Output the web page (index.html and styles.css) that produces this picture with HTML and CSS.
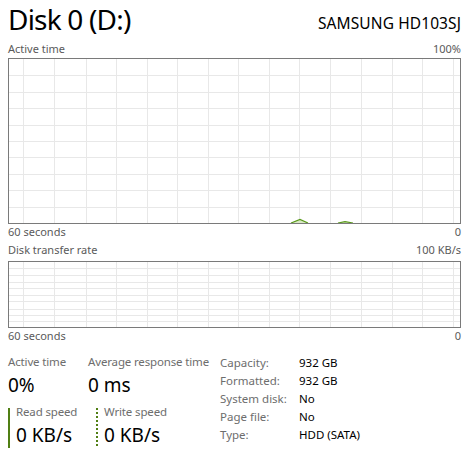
FILE: index.html
```html
<!DOCTYPE html>
<html>
<head>
<meta charset="utf-8">
<link rel="stylesheet" href="styles.css">
</head>
<body>
<div class="page">
  <header class="head">
    <h1 class="title">Disk 0 (D:)</h1>
    <div class="model">SAMSUNG HD103SJ</div>
  </header>

  <div class="axis axis-top1"><span>Active time</span><span>100%</span></div>
  <div class="chart chart-big">
    <svg class="grid" width="451" height="164" viewBox="0 0 451 164">
      <g stroke="#e8e8e8" stroke-width="1">
        <path d="M14.5 0V164M45.5 0V164M77.5 0V164M107.5 0V164M138.5 0V164M168.5 0V164M199.5 0V164M229.5 0V164M260.5 0V164M290.5 0V164M321.5 0V164M352.5 0V164M383.5 0V164M413.5 0V164M444.5 0V164"/>
        <path d="M0 16.5H451M0 33.5H451M0 49.5H451M0 66.5H451M0 82.5H451M0 98.5H451M0 115.5H451M0 131.5H451M0 148.5H451"/>
      </g>
      <path d="M282 164L291 160.5L299 164Z M329 164L336 162.6L344 164Z" fill="#d8e8c4"/>
      <path d="M282 164L291 160.5L299 164 M329 164L336 162.6L344 164" fill="none" stroke="#5a9a1c" stroke-width="1.2"/>
    </svg>
  </div>
  <div class="axis"><span>60 seconds</span><span>0</span></div>

  <div class="axis axis-top2"><span>Disk transfer rate</span><span>100 KB/s</span></div>
  <div class="chart chart-small">
    <svg class="grid" width="451" height="65" viewBox="0 0 451 65">
      <g stroke="#e8e8e8" stroke-width="1">
        <path d="M14.5 0V65M45.5 0V65M77.5 0V65M107.5 0V65M138.5 0V65M168.5 0V65M199.5 0V65M229.5 0V65M260.5 0V65M290.5 0V65M321.5 0V65M352.5 0V65M383.5 0V65M413.5 0V65M444.5 0V65"/>
        <path d="M0 6.5H451M0 13.5H451M0 20.5H451M0 26.5H451M0 33.5H451M0 39.5H451M0 47.5H451M0 53.5H451M0 59.5H451"/>
      </g>
    </svg>
  </div>
  <div class="axis"><span>60 seconds</span><span>0</span></div>

  <section class="stats">
    <div class="live">
      <div class="live-row">
        <div class="stat stat-active">
          <div class="stat-label">Active time</div>
          <div class="stat-value">0%</div>
        </div>
        <div class="stat">
          <div class="stat-label">Average response time</div>
          <div class="stat-value">0 ms</div>
        </div>
      </div>
      <div class="live-row speeds">
        <div class="speed speed-read">
          <div class="speed-label">Read speed</div>
          <div class="speed-value">0 KB/s</div>
        </div>
        <div class="speed speed-write">
          <div class="speed-label">Write speed</div>
          <div class="speed-value">0 KB/s</div>
        </div>
      </div>
    </div>
    <dl class="props">
      <dt>Capacity:</dt><dd>932 GB</dd>
      <dt>Formatted:</dt><dd>932 GB</dd>
      <dt>System disk:</dt><dd>No</dd>
      <dt>Page file:</dt><dd>No</dd>
      <dt>Type:</dt><dd>HDD (SATA)</dd>
    </dl>
  </section>
</div>
</body>
</html>
```

FILE: styles.css
```css
* { box-sizing: border-box; }

html, body {
  margin: 0;
  padding: 0;
  background: #ffffff;
}

body {
  font-family: "Noto Sans", "Open Sans", sans-serif;
  color: #000;
}

.page {
  width: 466px;
  padding: 0 5px 0 8px;
}

.head {
  display: flex;
  justify-content: space-between;
  align-items: flex-start;
  height: 35px;
}

.title {
  margin: 0;
  font-size: 28px;
  font-weight: 400;
  line-height: 39px;
  letter-spacing: -0.8px;
  white-space: nowrap;
}

.model {
  margin-top: 13px;
  font-size: 15.5px;
  line-height: 20px;
  letter-spacing: 0.1px;
  white-space: nowrap;
}

.axis {
  display: flex;
  justify-content: space-between;
  font-size: 11px;
  line-height: 16px;
  color: #5a5a5a;
}

.axis-top1 { margin-top: 6px; margin-bottom: 1px; }
.axis-top2 { margin-top: 2px; margin-bottom: 3px; }

.chart {
  border: 1px solid #7a7a7a;
  background: #fff;
}

.grid { display: block; }

.stats {
  display: flex;
  margin-top: 10px;
}

.live {
  width: 212px;
}

.live-row {
  display: flex;
}

.stat-active { width: 80px; }

.stat-label {
  font-size: 11.5px;
  line-height: 16px;
  letter-spacing: -0.15px;
  color: #6d6d6d;
  white-space: nowrap;
}

.stat-value {
  font-size: 19px;
  line-height: 30px;
}

.speeds {
  margin-top: 8px;
}

.speed {
  height: 40px;
  padding-left: 6px;
}

.speed-read {
  width: 88px;
  border-left: 2px solid #507f14;
}

.speed-write {
  position: relative;
  padding-left: 8px;
}

.speed-write::before {
  content: "";
  position: absolute;
  left: 0;
  top: 0;
  width: 2px;
  height: 40px;
  background: repeating-linear-gradient(to bottom, #507f14 0 2px, transparent 2px 4px);
}

.speed-label {
  margin-top: -3px;
  font-size: 11.5px;
  line-height: 14px;
  letter-spacing: -0.15px;
  color: #6d6d6d;
  white-space: nowrap;
}

.speed-value {
  margin-top: 3px;
  font-size: 19px;
  line-height: 26px;
  white-space: nowrap;
}

.props {
  margin: 0;
  display: grid;
  grid-template-columns: 79px auto;
  grid-auto-rows: 18px;
  font-size: 11.5px;
  line-height: 18px;
}

.props dt {
  color: #6d6d6d;
  white-space: nowrap;
}

.props dd {
  margin: 0;
  color: #000;
  white-space: nowrap;
}
```
